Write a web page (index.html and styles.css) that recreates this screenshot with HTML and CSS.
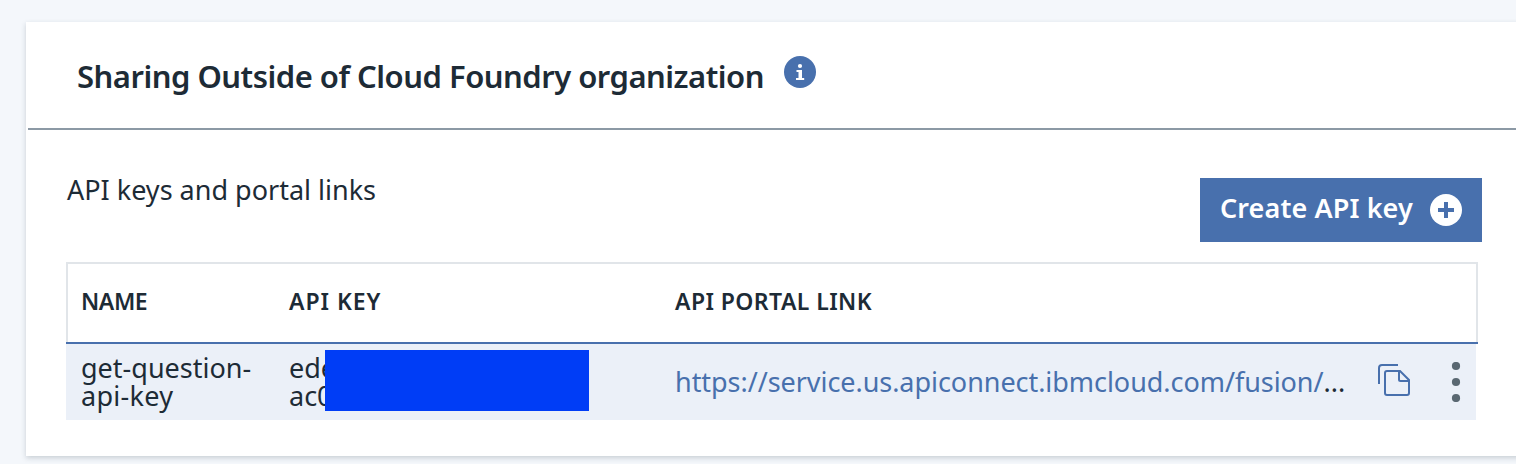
FILE: index.html
```html
<!DOCTYPE html>
<html lang="en">
<head>
<meta charset="utf-8">
<title>Sharing</title>
<link rel="stylesheet" href="styles.css">
</head>
<body>
<section class="card">
  <header class="card-header">
    <h1 class="title">Sharing Outside of Cloud Foundry organization</h1>
    <svg class="info" width="32" height="32" viewBox="0 0 32 32"><circle cx="16" cy="16" r="16" fill="#4870ad"/><circle cx="16" cy="10" r="2.100" fill="#fff"/><path d="M12.500 14H18v8h2.200v2H12v-2h2.500v-6h-2z" fill="#fff"/></svg>
  </header>
  <div class="toolbar">
    <h2 class="subtitle">API keys and portal links</h2>
    <button class="create"><span class="create-label">Create API key</span>
      <svg width="32" height="32" viewBox="0 0 32 32"><circle cx="16" cy="16" r="16" fill="#fff"/><path d="M14 8h4v6h6v4h-6v6h-4v-6H8v-4h6z" fill="#4870ad"/></svg>
    </button>
  </div>
  <div class="table">
    <div class="row head">
      <div class="cell h-name">NAME</div>
      <div class="cell h-key">API KEY</div>
      <div class="cell h-link">API PORTAL LINK</div>
    </div>
    <div class="row body">
      <div class="cell">get-question-<br><span class="name-end">api-key</span></div>
      <div class="cell key">ede<br>ac0<div class="redaction"></div></div>
      <div class="cell link"><a class="url">https://service.us.apiconnect.ibmcloud.com/fusion/</a><span class="dots">...</span></div>
      <svg class="copy" width="32" height="32" viewBox="0 0 32 32" fill="none" stroke="#4870ad" stroke-width="2"><path d="M1 20V4a3 3 0 0 1 3-3h16"/><path d="M9 7h13l9 9v13a2 2 0 0 1-2 2H9a2 2 0 0 1-2-2V9a2 2 0 0 1 2-2z"/><path d="M21 7v8.500a1.500 1.500 0 0 0 1.500 1.500H31"/></svg>
      <svg class="menu" width="10" height="40" viewBox="0 0 10 40" fill="#5a6872"><circle cx="5" cy="4" r="4.100"/><circle cx="5" cy="20" r="4.100"/><circle cx="5" cy="36" r="4.100"/></svg>
    </div>
  </div>
</section>
</body>
</html>
```

FILE: styles.css
```css
* { box-sizing: border-box; }
body {
  margin: 0;
  height: 464px;
  padding: 22px 0 0 26px;
  overflow: hidden;
  background: #f4f7fb;
  color: #1d2b36;
  font-family: "Noto Sans", "Open Sans", sans-serif;
}
.card {
  height: 434px;
  width: 1540px;
  padding-left: 2px;
  background: #fff;
  box-shadow: 0 2px 5px rgba(50, 70, 80, 0.22);
}
.card-header {
  display: flex;
  height: 108px;
  padding: 34px 0 0 49px;
  border-bottom: 2px solid #8c99a5;
}
.title {
  margin: 0;
  width: 707px;
  font-size: 31px;
  line-height: 40px;
  font-weight: 600;
  letter-spacing: -0.5px;
  white-space: nowrap;
}
.toolbar {
  display: flex;
  justify-content: space-between;
  width: 1454px;
  height: 132px;
  padding: 48px 0 0 39px;
}
.subtitle { margin: 0; font-size: 27px; line-height: 24px; font-weight: 400; }
.create {
  display: flex;
  align-items: center;
  justify-content: space-between;
  width: 282px;
  height: 64px;
  padding: 0 20px 0 20px;
  border: 0;
  background: #4870ad;
  color: #fff;
  font: 600 27px/40px "Noto Sans", sans-serif;
  letter-spacing: 0.1px;
  white-space: nowrap;
}
.create-label { margin-top: -4px; }
.table {
  width: 1412px;
  margin-left: 38px;
  background: linear-gradient(#4870ad, #4870ad) 0 80px / 100% 2px no-repeat;
}
.row { display: grid; grid-template-columns: 208px 386px 703px 73px 1fr; }
.head {
  height: 80px;
  padding: 0 0 4px 13px;
  align-items: center;
  border: 2px solid #e1e5e9;
  border-bottom: 0;
  font-size: 23px;
  font-weight: 600;
}
.h-name { letter-spacing: -0.4px; }
.h-key { letter-spacing: 0.95px; }
.h-link { letter-spacing: 0.42px; }
.body {
  width: 1410px;
  height: 76px;
  margin-top: 2px;
  padding-left: 15px;
  align-items: center;
  background: #ebf0f8;
  font-size: 27px;
  line-height: 28px;
}
.cell { white-space: nowrap; }
.name-end { letter-spacing: 0.3px; }
.key { position: relative; }
.redaction { position: absolute; left: 36px; top: -4px; width: 264px; height: 61px; background: #003df6; }
.url { color: #4870ad; letter-spacing: -0.05px; }
.copy { margin-bottom: 4px; }
```
